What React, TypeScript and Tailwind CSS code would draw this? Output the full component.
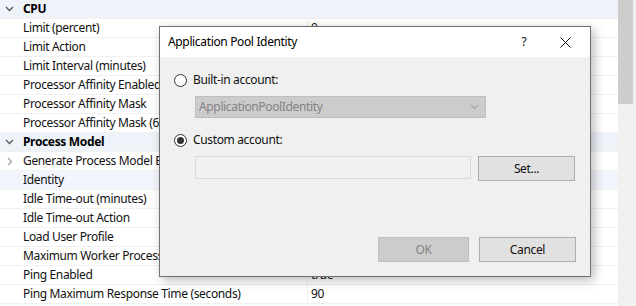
import React from "react";

type Row =
  | { kind: "header"; label: string }
  | { kind: "item"; label: string; value?: string; expander?: boolean; selected?: boolean };

// values hidden under the dialog are left blank
const rows: Row[] = [
  { kind: "header", label: "CPU" },
  { kind: "item", label: "Limit (percent)", value: "0" },
  { kind: "item", label: "Limit Action" },
  { kind: "item", label: "Limit Interval (minutes)" },
  { kind: "item", label: "Processor Affinity Enabled" },
  { kind: "item", label: "Processor Affinity Mask" },
  { kind: "item", label: "Processor Affinity Mask (64-bit option)" },
  { kind: "header", label: "Process Model" },
  { kind: "item", label: "Generate Process Model Event Log Entry", expander: true },
  { kind: "item", label: "Identity", selected: true },
  { kind: "item", label: "Idle Time-out (minutes)" },
  { kind: "item", label: "Idle Time-out Action" },
  { kind: "item", label: "Load User Profile" },
  { kind: "item", label: "Maximum Worker Processes" },
  { kind: "item", label: "Ping Enabled", value: "true" },
  { kind: "item", label: "Ping Maximum Response Time (seconds)", value: "90" },
  { kind: "item", label: "" },
];

const ChevronDown = ({ color = "#555" }: { color?: string }) => (
  <svg width="9" height="6" viewBox="0 0 9 6">
    <path d="M1 1 L4.5 4.5 L8 1" fill="none" stroke={color} strokeWidth="1.3" />
  </svg>
);

const ChevronRight = () => (
  <svg width="6" height="9" viewBox="0 0 6 9">
    <path d="M1 1 L4.5 4.5 L1 8" fill="none" stroke="#a0a0a0" strokeWidth="1.3" />
  </svg>
);

const Radio = ({ checked }: { checked?: boolean }) => (
  <span className="flex h-[13px] w-[13px] items-center justify-center rounded-full border border-[#333] bg-white">
    {checked && <span className="h-[7px] w-[7px] rounded-full bg-[#333]" />}
  </span>
);

const PropertyGrid = () => (
  <div className="flex w-[618px] flex-col">
    {rows.map((row, i) =>
      row.kind === "header" ? (
        <div key={i} className="flex h-[19px] shrink-0 items-center border-b border-[#f0f0f0] bg-[#eef3fa]">
          <div className="flex w-[19px] justify-center">
            <ChevronDown />
          </div>
          <span className="pl-1 font-bold text-[#000]">{row.label}</span>
        </div>
      ) : (
        <div
          key={i}
          className={`flex h-[19px] shrink-0 items-center border-b border-[#f0f0f0] ${row.selected ? "bg-[#f2f5fb]" : "bg-white"}`}
        >
          <div className="flex w-[19px] justify-center">{row.expander && <ChevronRight />}</div>
          <div className="h-full w-[289px] truncate whitespace-nowrap border-r border-[#f0f0f0] pl-1 leading-[18px]">
            {row.label}
          </div>
          <div className="flex-1 pl-[3px] leading-[18px]">{row.value}</div>
        </div>
      )
    )}
  </div>
);

const Dialog = () => (
  <div className="absolute left-[159px] top-[26px] flex h-[251px] w-[432px] flex-col border border-[#707070] bg-[#f0f0f0] shadow-[3px_3px_10px_rgba(0,0,0,0.28)]">
    <div className="flex h-[30px] items-center bg-white pl-[8px]">
      <span className="flex-1 text-[#000]">Application Pool Identity</span>
      <span className="w-[20px] text-center">?</span>
      <span className="ml-[24px] mr-[18px] flex w-[14px] justify-center">
        <svg width="11" height="11" viewBox="0 0 11 11">
          <path d="M0.5 0.5 L10.5 10.5 M10.5 0.5 L0.5 10.5" stroke="#111" strokeWidth="1" />
        </svg>
      </span>
    </div>
    <div className="flex flex-col pl-[14px] pr-[14px] pt-[13px]">
      <label className="flex h-[20px] items-center gap-[6px]">
        <Radio />
        <span>Built-in account:</span>
      </label>
      <div className="ml-[21px] mt-[6px] flex h-[22px] w-[291px] items-center justify-between border border-[#bfbfbf] bg-[#cccccc] pl-[3px] pr-[6px] text-[#838383]">
        <span>ApplicationPoolIdentity</span>
        <ChevronDown color="#a8a8a8" />
      </div>
      <label className="mt-[12px] flex h-[20px] items-center gap-[6px]">
        <Radio checked />
        <span>Custom account:</span>
      </label>
      <div className="ml-[21px] mt-[6px] flex items-start gap-[7px]">
        <div className="h-[23px] w-[276px] border border-[#d9d9d9] bg-[#f0f0f0]" />
        <button className="h-[25px] w-[97px] border border-[#adadad] bg-[#e1e1e1]">Set...</button>
      </div>
      <div className="mt-[56px] flex justify-end gap-[10px]">
        <button className="h-[25px] w-[91px] border border-[#bfbfbf] bg-[#cccccc] text-[#838383]">OK</button>
        <button className="h-[25px] w-[97px] border border-[#adadad] bg-[#e1e1e1]">Cancel</button>
      </div>
    </div>
  </div>
);

export default function App() {
  return (
    <div
      className="relative flex h-[306px] w-[636px] overflow-hidden bg-white text-[12px] tracking-[-0.35px] text-[#111]"
      style={{ fontFamily: '"Noto Sans", "Open Sans", sans-serif' }}
    >
      <PropertyGrid />
      <div className="flex w-[18px] flex-col bg-[#f0f0f0] pr-[3px]">
        <div className="h-[104px] bg-[#cdcdcd]" />
      </div>
      <Dialog />
    </div>
  );
}
